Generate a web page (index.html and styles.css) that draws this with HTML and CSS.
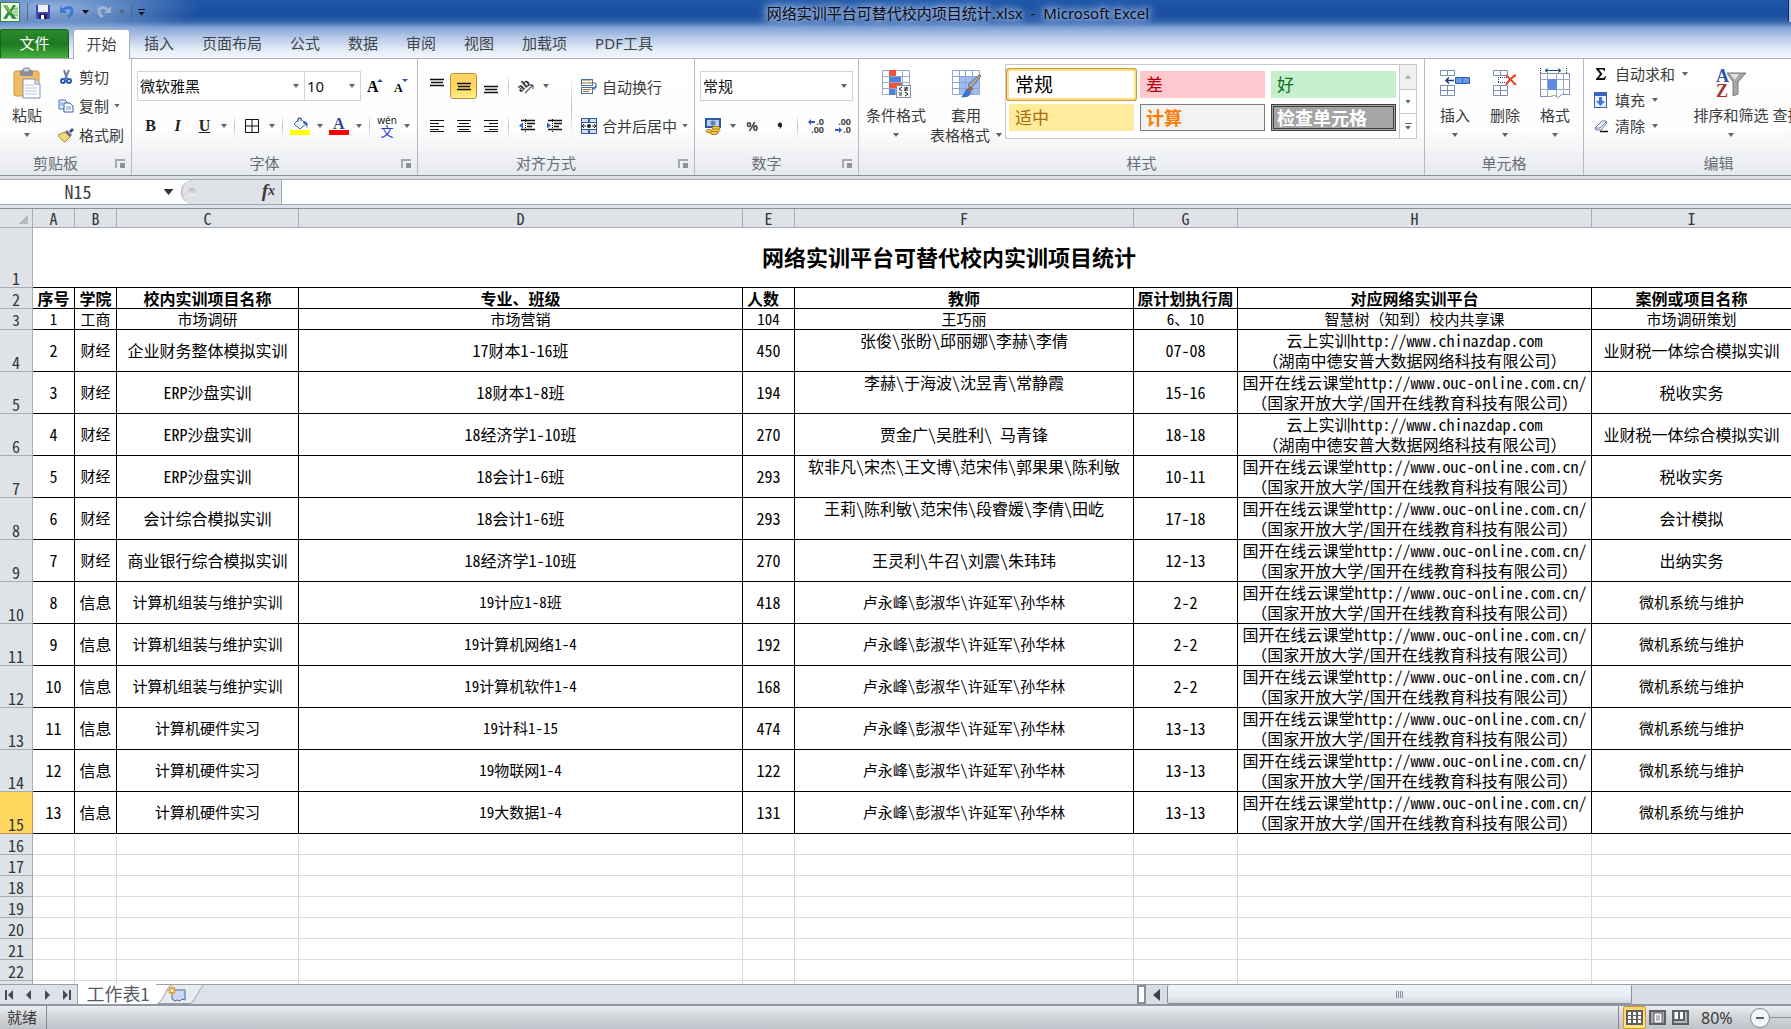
FILE: index.html
```html
<!DOCTYPE html>
<html lang="zh-CN">
<head>
<meta charset="utf-8">
<title>网络实训平台可替代校内项目统计.xlsx - Microsoft Excel</title>
<link rel="stylesheet" href="styles.css">
</head>
<body>
<header class="top">
  <div class="titlebar">
    <div class="qat">
      <svg class="logo" width="21" height="21" viewBox="0 0 21 21"><rect x="0" y="0" width="20" height="20" fill="#2e8b3c"/><rect x="1" y="1" width="18" height="18" fill="#f4fbf2"/><path d="M13 4h5v13h-5z" fill="#cfe6c4"/><path d="M13 7h5M13 10h5M13 13h5" stroke="#6aa860"/><path d="M3 3h4l3 5 3-5h3l-4.500 7 5 7h-4l-3-4.500-3 4.500H3l4.500-7z" fill="#2f8f3a"/><path d="M3 3h4l4 7-1 1z" fill="#7cc242"/></svg>
      <span class="qsep"></span>
      <button class="qb" aria-label="保存"><svg width="14" height="14" viewBox="0 0 14 14"><path d="M0 0h14v14H1L0 13z" fill="#4347b5"/><rect x="2" y="0" width="10" height="7" fill="#eef2fb"/><rect x="3" y="9" width="8" height="5" fill="#20234f"/><rect x="5" y="10" width="3" height="4" fill="#fff"/></svg></button>
      <button class="qb" aria-label="撤消"><svg width="14" height="14" viewBox="0 0 14 14"><path d="M3 5c4-4 9-3 9 1 0 3-2 5-4 6" fill="none" stroke="#3b78d8" stroke-width="3"/><path d="M0 1v7h7z" fill="#3b78d8"/></svg></button>
      <span class="caret dark"></span>
      <button class="qb" aria-label="恢复"><svg width="14" height="14" viewBox="0 0 14 14"><path d="M11 5C7 1 2 2 2 6c0 3 2 5 4 6" fill="none" stroke="#a3b2cc" stroke-width="3"/><path d="M14 1v7H7z" fill="#a3b2cc"/></svg></button>
      <span class="caret"></span>
      <span class="qsep"></span>
      <button class="more" aria-label="自定义快速访问工具栏"><i></i><span class="caret dark"></span></button>
    </div>
    <h1>网络实训平台可替代校内项目统计.xlsx&nbsp; -&nbsp; Microsoft Excel</h1>
    <span class="winbtn"></span>
  </div>
  <nav class="tabs">
    <button class="file">文件</button>
    <button class="on">开始</button>
    <button>插入</button><button>页面布局</button><button>公式</button><button>数据</button><button>审阅</button><button>视图</button><button>加载项</button><button>PDF工具</button>
  </nav>
</header>

<div class="ribbon">
  <section class="group g-clip">
    <div class="body">
      <button class="big paste">
        <svg width="32" height="32" viewBox="0 0 32 32"><rect x="3" y="4" width="25" height="25" rx="2" fill="#f0bd62" stroke="#d09a3c"/><rect x="9" y="3" width="13" height="6" rx="1" fill="#8a909a"/><rect x="12" y="1" width="7" height="4" rx="2" fill="#cfd3d8" stroke="#7d838c"/><path d="M12 12h12l5 5v14H12z" fill="#fff" stroke="#7d93b5"/><path d="M24 12v5h5" fill="#dfe8f5" stroke="#7d93b5"/><path d="M14 18h9M14 21h12M14 24h12M14 27h12" stroke="#b5c3da"/></svg>
        <span>粘贴</span><span class="caret"></span>
      </button>
      <div class="list l29">
        <button><svg width="16" height="16" viewBox="0 0 16 16"><path d="M6 1l3 9M11 1L7 10" stroke="#6d7f9c" stroke-width="2"/><circle cx="5" cy="12" r="2" fill="none" stroke="#2758b8" stroke-width="2"/><circle cx="11" cy="12" r="2" fill="none" stroke="#2758b8" stroke-width="2"/></svg>剪切</button>
        <button><svg width="16" height="16" viewBox="0 0 16 16"><path d="M1 2h6l2 2v7H1z" fill="#eaf2ff" stroke="#4272b8"/><path d="M6 5h6l3 3v6H6z" fill="#fff" stroke="#2d5ca8"/><path d="M2 5h3M2 7h3M8 9h5M8 11h5" stroke="#6c96d6"/></svg>复制<span class="caret"></span></button>
        <button><svg width="16" height="16" viewBox="0 0 16 16"><path d="M0 8l7-3 5 5-5 5c-2-1-5-3-7-7z" fill="#f0d878" stroke="#a88a30"/><path d="M7 5l2-2 5 5-2 2z" fill="#6b6f95"/><path d="M11 4l3-3 2 2-3 3z" fill="#454a85"/></svg>格式刷</button>
      </div>
    </div>
    <footer><span>剪贴板</span><button class="dlg" aria-label="剪贴板设置"></button></footer>
  </section>

  <section class="group g-font">
    <div class="body col">
      <div class="row">
        <label class="combo w168"><select aria-label="字体"><option>微软雅黑</option></select><span class="caret"></span></label>
        <label class="combo w56"><select aria-label="字号"><option>10</option></select><span class="caret"></span></label>
        <button class="t w27" aria-label="增大字号"><svg width="17" height="16" viewBox="0 0 17 16"><text x="1" y="14" class="sf" font-size="16">A</text><path d="M11 4l3-3 3 3z" fill="#2f4fae"/></svg></button>
        <button class="t w24" aria-label="减小字号"><svg width="15" height="16" viewBox="0 0 15 16"><text x="1" y="14" class="sf" font-size="12">A</text><path d="M9 1h6l-3 3z" fill="#2f4fae"/></svg></button>
      </div>
      <div class="row r2">
        <button class="t w27 sfb"><b>B</b></button><button class="t w27 sfb"><i>I</i></button><button class="t w27 sfb"><u>U</u></button><span class="ca"></span><span class="vs"></span>
        <button class="t w28" aria-label="边框"><svg width="14" height="14" viewBox="0 0 14 14"><path d="M.5.5h13v13H.5zM7 0v14M0 7h14" fill="none" stroke="#111"/></svg></button><span class="ca"></span><span class="vs"></span>
        <button class="t w28" aria-label="填充颜色"><svg width="20" height="18" viewBox="0 0 20 18"><path d="M4 7l6-6 6 6-6 5z" fill="#eef4fb" stroke="#47638f"/><path d="M8 5V1h3v3" fill="none" stroke="#47638f"/><path d="M14 4c4 1 4 4 3 7-1-3-1-4-4-5z" fill="#2c5fb8"/><rect x="0" y="13" width="20" height="5" fill="#ff0"/></svg></button><span class="ca"></span>
        <button class="t w28" aria-label="字体颜色"><svg width="20" height="18" viewBox="0 0 20 18"><text x="4" y="12" font-size="16" class="sf" fill="#2b4b8d">A</text><rect x="0" y="13" width="20" height="5" fill="red"/></svg></button><span class="ca"></span><span class="vs"></span>
        <button class="t w28 pinyin" aria-label="拼音"><span>wén</span><span>文</span></button><span class="ca"></span>
      </div>
    </div>
    <footer><span>字体</span><button class="dlg" aria-label="字体设置"></button></footer>
  </section>

  <section class="group g-align">
    <div class="body">
      <div class="col">
        <div class="row">
          <button class="t w27" aria-label="顶端对齐"><svg width="14" height="20" viewBox="0 0 14 20"><path d="M0 3.500h14M1 6.500h12M0 9.500h14" stroke="#111" stroke-width="1.500"/></svg></button>
          <button class="t w27 active" aria-label="垂直居中"><svg width="14" height="20" viewBox="0 0 14 20"><path d="M0 7.500h14M1 10.500h12M0 13.500h14" stroke="#111" stroke-width="1.500"/></svg></button>
          <button class="t w27" aria-label="底端对齐"><svg width="14" height="20" viewBox="0 0 14 20"><path d="M0 10.500h14M1 13.500h12M0 16.500h14" stroke="#111" stroke-width="1.500"/></svg></button>
          <span class="vs"></span>
          <button class="t w27" aria-label="方向"><svg width="17" height="16" viewBox="0 0 17 16"><text x="0" y="12" font-size="11" font-weight="bold" font-family="Noto Sans" transform="rotate(-40 5 10)" fill="#333">ab</text><path d="M7 15l8-8M15 7h-4M15 7v4" stroke="#666" fill="none" stroke-width="1.300"/></svg></button><span class="ca"></span>
        </div>
        <div class="row r2">
          <button class="t w27" aria-label="左对齐"><svg width="14" height="14" viewBox="0 0 14 14"><path d="M0 1.500h14M0 4.500h9M0 7.500h14M0 10.500h9M0 12.500h14" stroke="#111"/></svg></button>
          <button class="t w27" aria-label="居中"><svg width="14" height="14" viewBox="0 0 14 14"><path d="M0 1.500h14M2 4.500h10M0 7.500h14M2 10.500h10M0 12.500h14" stroke="#111"/></svg></button>
          <button class="t w27" aria-label="右对齐"><svg width="14" height="14" viewBox="0 0 14 14"><path d="M0 1.500h14M5 4.500h9M0 7.500h14M5 10.500h9M0 12.500h14" stroke="#111"/></svg></button>
          <span class="vs"></span>
          <button class="t w27" aria-label="减少缩进"><svg width="16" height="14" viewBox="0 0 16 14"><path d="M2 1.500h14M8 4.500h8M8 7.500h5M2 10.500h14" stroke="#111" stroke-width="1.500"/><path d="M6.500 0v14" stroke="#111" stroke-dasharray="1 1"/><path d="M0 6.500l4-3v6z" fill="#2f5fd0"/></svg></button>
          <button class="t w27" aria-label="增加缩进"><svg width="16" height="14" viewBox="0 0 16 14"><path d="M2 1.500h14M8 4.500h8M8 7.500h5M2 10.500h14" stroke="#111" stroke-width="1.500"/><path d="M6.500 0v14" stroke="#111" stroke-dasharray="1 1"/><path d="M5 6.500l-4-3v6z" fill="#2f5fd0"/></svg></button>
        </div>
      </div>
      <span class="vs tall"></span>
      <div class="list l39">
        <button><svg width="16" height="16" viewBox="0 0 16 16"><path d="M0 1h10M0 4h15" stroke="#9a6a3a"/><rect x=".5" y=".5" width="11" height="6" fill="none" stroke="#4c6ea8"/><rect x=".5" y="8.500" width="11" height="6" fill="#fff" stroke="#4c6ea8"/><path d="M2 10.500h8M2 12.500h6" stroke="#9a6a3a"/><path d="M15 4v5h-2M15 7l-3 2 2 2" stroke="#2f5fb0" fill="none"/></svg>自动换行</button>
        <button><svg width="16" height="16" viewBox="0 0 16 16"><rect width="16" height="16" fill="#3a5a94"/><path d="M1 1h6v3H1zM9 1h6v3H9zM1 12h6v3H1zM9 12h6v3H9z" fill="#cfdff5"/><rect x="1" y="5" width="14" height="6" fill="#fff"/><path d="M1 8h4M15 8h-4M3 6L1 8l2 2M13 6l2 2-2 2" stroke="#222" fill="none"/><circle cx="8" cy="8" r="2" fill="#222"/></svg>合并后居中<span class="caret"></span></button>
      </div>
    </div>
    <footer><span>对齐方式</span><button class="dlg" aria-label="对齐设置"></button></footer>
  </section>

  <section class="group g-num">
    <div class="body col">
      <div class="row"><label class="combo w155"><select aria-label="数字格式"><option>常规</option></select><span class="caret"></span></label></div>
      <div class="row r2">
        <button class="t w27" aria-label="会计数字格式"><svg width="17" height="17" viewBox="0 0 17 17"><rect x="0" y="0" width="16" height="10" fill="#2f5aa5"/><rect x="2" y="2" width="12" height="6" fill="#b9d0ee"/><circle cx="8" cy="5" r="2.500" fill="#5880c0"/><ellipse cx="11" cy="10" rx="4" ry="1.600" fill="#f7cf4a" stroke="#b57a14"/><ellipse cx="11" cy="12.500" rx="4" ry="1.600" fill="#f7cf4a" stroke="#b57a14"/><ellipse cx="9" cy="15" rx="4" ry="1.600" fill="#f7cf4a" stroke="#b57a14"/><ellipse cx="4" cy="13" rx="3" ry="1.500" fill="#f7cf4a" stroke="#b57a14"/></svg></button><span class="ca"></span>
        <button class="t w28 pct">%</button><button class="t w27" aria-label="千位分隔"><svg width="6" height="8" viewBox="0 0 6 8"><path d="M1 2a2 2 0 1 1 4 1c0 2-1 3-3 4 1-1 1-2 1-2a2 2 0 0 1-2-3z" fill="#222"/></svg></button><span class="vs"></span>
        <button class="t w27 dec" aria-label="增加小数位数"><span><svg width="7" height="6" viewBox="0 0 7 6"><path d="M0 3l3-3v2h4v2H3v2z" fill="#2f5fc0"/></svg>.0</span><span>.00</span></button>
        <button class="t w27 dec" aria-label="减少小数位数"><span>.00</span><span><svg width="7" height="6" viewBox="0 0 7 6"><path d="M7 3L4 0v2H0v2h4v2z" fill="#2f5fc0"/></svg>.0</span></button>
      </div>
    </div>
    <footer><span>数字</span><button class="dlg" aria-label="数字设置"></button></footer>
  </section>

  <section class="group g-style">
    <div class="body">
      <button class="big w64"><svg width="32" height="32" viewBox="0 0 32 32"><path d="M2.500 3.500h27v24h-27zM9.500 3v25M15.500 3v25M22.500 3v25M2 9.500h28M2 15.500h28M2 21.500h28" fill="#fff" stroke="#9aa9c8"/><path d="M9 3h7v6H9z" fill="#f0533a"/><path d="M9 10h12v5H9z" fill="#4f7fdc"/><path d="M9 16h13v5H9z" fill="#f0533a"/><path d="M9 22h6v6H9z" fill="#4f7fdc"/><rect x="16.500" y="18.500" width="14" height="12" fill="#f4f6f9" stroke="#8490a8"/><path d="M22 20l-3 2 3 2M19 26h3M19 28h3M24 21h4M24 23h4M27 20l-2 4M25 25l3 2-3 2" stroke="#222" fill="none"/></svg><span>条件格式</span><span class="caret"></span></button>
      <button class="big w74"><svg width="32" height="32" viewBox="0 0 32 32"><path d="M2.500 3.500h27v24h-27z" fill="#fff" stroke="#9aa9c8"/><path d="M9 9h20v18H9z" fill="#9dbdf0"/><path d="M9.500 3v25M15.500 3v25M22.500 3v25M2 9.500h28M2 15.500h28M2 21.500h28" stroke="#8ba3d0"/><path d="M31 9l-10 12-3-3L29 8z" fill="#a9a9a9" stroke="#6d6d6d"/><path d="M20 19l3 3-3 3-3-3z" fill="#a0622c"/><path d="M18 22c-4 0-3 5-7 8 5 1 9 0 10-5z" fill="#3f74cc"/></svg><span>套用</span><span class="line">表格格式 <span class="caret"></span></span></button>
      <div class="gallery">
        <div class="swatches">
          <button class="s-normal">常规</button><button class="s-bad">差</button><button class="s-good">好</button>
          <button class="s-neutral">适中</button><button class="s-calc">计算</button><button class="s-check">检查单元格</button>
        </div>
        <div class="scroller"><button aria-label="向上" class="dis"><span class="caret up"></span></button><button aria-label="向下"><span class="caret"></span></button><button aria-label="其他"><i></i><span class="caret"></span></button></div>
      </div>
    </div>
    <footer><span>样式</span></footer>
  </section>

  <section class="group g-cells">
    <div class="body">
      <button class="big w50"><svg width="32" height="32" viewBox="0 0 32 32"><path d="M1.500 3.500h14v5h-14zM8.500 3v6M1.500 18.500h14v10h-14zM8.500 18v11M1 23.500h15" fill="#fff" stroke="#7d8fae"/><path d="M16.500 10.500h14v6h-14z" fill="#6d98e8" stroke="#2f5cb4"/><path d="M23.500 10v7" stroke="#2f5cb4"/><path d="M7 13.500h8M10 10.500l-3 3 3 3" stroke="#1d3c78" fill="none" stroke-width="1.500"/></svg><span>插入</span><span class="caret"></span></button>
      <button class="big w50"><svg width="32" height="32" viewBox="0 0 32 32"><path d="M4.500 3.500h14v5h-14zM11.500 3v6M4.500 18.500h14v10h-14zM11.500 18v11M4 23.500h15" fill="#fff" stroke="#7d8fae"/><path d="M9 10.500h9M9.500 10v6M9 15.500h9" stroke="#1d3c78" stroke-dasharray="1 1"/><path d="M17 8l10 10M27 8c-4 2-7 5-10 10" stroke="#ee4430" stroke-width="2" fill="none"/></svg><span>删除</span><span class="caret"></span></button>
      <button class="big w50"><svg width="32" height="32" viewBox="0 0 32 32"><path d="M1.500 6.500h29v21h-8l-3 3-4-2-4 1h-10z" fill="#fff" stroke="#7d8fae"/><path d="M8.500 6v24M17.500 6v24M24.500 6v22M1 12.500h30M1 22.500h30" stroke="#9aa9c8"/><path d="M9 12h9v11H9z" fill="#5d8be4"/><path d="M1.500 1v5M27.500 1v5" stroke="#333" stroke-dasharray="1 1"/><path d="M7 3.500h14M9 1.500l-3 2 3 2M19 1.500l3 2-3 2" stroke="#24427c" fill="none"/></svg><span>格式</span><span class="caret"></span></button>
    </div>
    <footer><span>单元格</span></footer>
  </section>

  <section class="group g-edit">
    <div class="body">
      <div class="list l26">
        <button><svg width="14" height="16" viewBox="0 0 14 16"><path d="M2 2h9v3h-1c0-1-1-1.500-2-1.500H5L8.500 8 5 12h3.500c1 0 2-.5 2.500-2h1l-1 4H2v-1l4-5-4-5z" fill="#111"/></svg>自动求和<span class="caret"></span></button>
        <button><svg width="14" height="16" viewBox="0 0 14 16"><rect x=".5" y=".5" width="12" height="15" fill="#e8f0fc" stroke="#3a5fb0"/><rect x="1" y="1" width="11" height="3" fill="#3d63bd"/><path d="M5 5h3v4h3l-4.500 5L2 9h3z" fill="#3f74dc"/></svg>填充<span class="caret"></span></button>
        <button><svg width="14" height="16" viewBox="0 0 14 16"><path d="M1 10l7-7h4l1 2-6 7H2z" fill="#f2f5fb" stroke="#6f7fa8"/><path d="M1 10h5l6-6" fill="none" stroke="#6f7fa8"/><path d="M6 13.500h8" stroke="#111" stroke-width="1.500"/></svg>清除<span class="caret"></span></button>
      </div>
      <button class="big w84"><svg width="32" height="32" viewBox="0 0 32 32"><text x="1" y="15" class="sf" font-size="18" fill="#2f55a8">A</text><text x="1" y="30" class="sf" font-size="18" fill="#a83232">Z</text><path d="M12 6h19l-8 9v12l-5 2V15z" fill="#a6a6a6" stroke="#7a7a7a"/><path d="M15 7h9l-4 6z" fill="#e2e2e2"/></svg><span>排序和筛选</span><span class="caret"></span></button>
      <button class="big w76"><svg width="32" height="32" viewBox="0 0 32 32"><circle cx="20" cy="14" r="9" fill="none" stroke="#456" stroke-width="3"/></svg><span>查找和选择</span><span class="caret"></span></button>
    </div>
    <footer><span>编辑</span></footer>
  </section>
</div>

<div class="fbar">
  <input class="name" aria-label="名称框" value="N15"><button class="ndrop" aria-label="名称列表"><span class="caret big-c"></span></button>
  <div class="pill"><i></i><button class="fx" aria-label="插入函数">f<small>x</small></button></div>
  <input class="formula" aria-label="编辑栏">
</div>

<main class="sheet">
<table>
<colgroup><col class="c0"><col class="ca1"><col class="ca1"><col class="cc"><col class="cd"><col class="ce"><col class="cf"><col class="cg"><col class="ch"><col><col class="cj"></colgroup>
<thead><tr><th class="corner"></th><th>A</th><th>B</th><th>C</th><th>D</th><th>E</th><th>F</th><th>G</th><th>H</th><th>I</th><th>J</th></tr></thead>
<tbody class="data">
<tr class="r60"><th>1</th><td colspan="10" class="title">网络实训平台可替代校内实训项目统计</td></tr>
<tr class="r21 head"><th>2</th><td>序号</td><td>学院</td><td>校内实训项目名称</td><td>专业、班级</td><td class="lft">人数</td><td>教师</td><td>原计划执行周</td><td>对应网络实训平台</td><td>案例或项目名称</td><td></td></tr>
<tr class="r21 s"><th>3</th><td>1</td><td>工商</td><td>市场调研</td><td>市场营销</td><td>104</td><td>王巧丽</td><td>6、10</td><td class="full">智慧树（知到）校内共享课</td><td>市场调研策划</td><td></td></tr>
<tr><th>4</th><td>2</td><td class="s">财经</td><td>企业财务整体模拟实训</td><td>17财本1-16班</td><td>450</td><td class="up">张俊\张盼\邱丽娜\李赫\李倩</td><td>07-08</td><td>云上实训http://www.chinazdap.com<br><span class="full">（湖南中德安普大数据网络科技有限公司）</span></td><td>业财税一体综合模拟实训</td><td></td></tr>
<tr><th>5</th><td>3</td><td class="s">财经</td><td>ERP沙盘实训</td><td>18财本1-8班</td><td>194</td><td class="up">李赫\于海波\沈昱青\常静霞</td><td>15-16</td><td>国开在线云课堂http://www.ouc-online.com.cn/<br><span class="full">（国家开放大学/国开在线教育科技有限公司）</span></td><td>税收实务</td><td></td></tr>
<tr><th>6</th><td>4</td><td class="s">财经</td><td>ERP沙盘实训</td><td>18经济学1-10班</td><td>270</td><td>贾金广\吴胜利\ 马青锋</td><td>18-18</td><td>云上实训http://www.chinazdap.com<br><span class="full">（湖南中德安普大数据网络科技有限公司）</span></td><td>业财税一体综合模拟实训</td><td></td></tr>
<tr><th>7</th><td>5</td><td class="s">财经</td><td>ERP沙盘实训</td><td>18会计1-6班</td><td>293</td><td class="up">软非凡\宋杰\王文博\范宋伟\郭果果\陈利敏</td><td>10-11</td><td>国开在线云课堂http://www.ouc-online.com.cn/<br><span class="full">（国家开放大学/国开在线教育科技有限公司）</span></td><td>税收实务</td><td></td></tr>
<tr><th>8</th><td>6</td><td class="s">财经</td><td>会计综合模拟实训</td><td>18会计1-6班</td><td>293</td><td class="up">王莉\陈利敏\范宋伟\段睿媛\李倩\田屹</td><td>17-18</td><td>国开在线云课堂http://www.ouc-online.com.cn/<br><span class="full">（国家开放大学/国开在线教育科技有限公司）</span></td><td>会计模拟</td><td></td></tr>
<tr><th>9</th><td>7</td><td class="s">财经</td><td>商业银行综合模拟实训</td><td>18经济学1-10班</td><td>270</td><td>王灵利\牛召\刘震\朱玮玮</td><td>12-13</td><td>国开在线云课堂http://www.ouc-online.com.cn/<br><span class="full">（国家开放大学/国开在线教育科技有限公司）</span></td><td>出纳实务</td><td></td></tr>
<tr><th>10</th><td>8</td><td>信息</td><td class="s">计算机组装与维护实训</td><td class="s">19计应1-8班</td><td>418</td><td class="s">卢永峰\彭淑华\许延军\孙华林</td><td>2-2</td><td>国开在线云课堂http://www.ouc-online.com.cn/<br><span class="full">（国家开放大学/国开在线教育科技有限公司）</span></td><td class="s">微机系统与维护</td><td></td></tr>
<tr><th>11</th><td>9</td><td>信息</td><td class="s">计算机组装与维护实训</td><td class="s">19计算机网络1-4</td><td>192</td><td class="s">卢永峰\彭淑华\许延军\孙华林</td><td>2-2</td><td>国开在线云课堂http://www.ouc-online.com.cn/<br><span class="full">（国家开放大学/国开在线教育科技有限公司）</span></td><td class="s">微机系统与维护</td><td></td></tr>
<tr><th>12</th><td>10</td><td>信息</td><td class="s">计算机组装与维护实训</td><td class="s">19计算机软件1-4</td><td>168</td><td class="s">卢永峰\彭淑华\许延军\孙华林</td><td>2-2</td><td>国开在线云课堂http://www.ouc-online.com.cn/<br><span class="full">（国家开放大学/国开在线教育科技有限公司）</span></td><td class="s">微机系统与维护</td><td></td></tr>
<tr><th>13</th><td>11</td><td>信息</td><td class="s">计算机硬件实习</td><td class="s">19计科1-15</td><td>474</td><td class="s">卢永峰\彭淑华\许延军\孙华林</td><td>13-13</td><td>国开在线云课堂http://www.ouc-online.com.cn/<br><span class="full">（国家开放大学/国开在线教育科技有限公司）</span></td><td class="s">微机系统与维护</td><td></td></tr>
<tr><th>14</th><td>12</td><td>信息</td><td class="s">计算机硬件实习</td><td class="s">19物联网1-4</td><td>122</td><td class="s">卢永峰\彭淑华\许延军\孙华林</td><td>13-13</td><td>国开在线云课堂http://www.ouc-online.com.cn/<br><span class="full">（国家开放大学/国开在线教育科技有限公司）</span></td><td class="s">微机系统与维护</td><td></td></tr>
<tr class="cur"><th>15</th><td>13</td><td>信息</td><td class="s">计算机硬件实习</td><td class="s">19大数据1-4</td><td>131</td><td class="s">卢永峰\彭淑华\许延军\孙华林</td><td>13-13</td><td>国开在线云课堂http://www.ouc-online.com.cn/<br><span class="full">（国家开放大学/国开在线教育科技有限公司）</span></td><td class="s">微机系统与维护</td><td></td></tr>
</tbody>
<tbody class="blank">
<tr><th>16</th><td></td><td></td><td></td><td></td><td></td><td></td><td></td><td></td><td></td><td></td></tr>
<tr><th>17</th><td></td><td></td><td></td><td></td><td></td><td></td><td></td><td></td><td></td><td></td></tr>
<tr><th>18</th><td></td><td></td><td></td><td></td><td></td><td></td><td></td><td></td><td></td><td></td></tr>
<tr><th>19</th><td></td><td></td><td></td><td></td><td></td><td></td><td></td><td></td><td></td><td></td></tr>
<tr><th>20</th><td></td><td></td><td></td><td></td><td></td><td></td><td></td><td></td><td></td><td></td></tr>
<tr><th>21</th><td></td><td></td><td></td><td></td><td></td><td></td><td></td><td></td><td></td><td></td></tr>
<tr><th>22</th><td></td><td></td><td></td><td></td><td></td><td></td><td></td><td></td><td></td><td></td></tr>
<tr><th></th><td></td><td></td><td></td><td></td><td></td><td></td><td></td><td></td><td></td><td></td></tr>
</tbody>
</table>
</main>

<div class="sheetbar">
  <div class="navs">
    <button aria-label="第一张"><svg width="9" height="10" viewBox="0 0 9 10"><path d="M1 0v10" stroke="#444b57" stroke-width="2"/><path d="M8 0v10L3 5z" fill="#444b57"/></svg></button>
    <button aria-label="上一张"><svg width="9" height="10" viewBox="0 0 9 10"><path d="M7 0v10L2 5z" fill="#444b57"/></svg></button>
    <button aria-label="下一张"><svg width="9" height="10" viewBox="0 0 9 10"><path d="M2 0v10l5-5z" fill="#444b57"/></svg></button>
    <button aria-label="最后一张"><svg width="9" height="10" viewBox="0 0 9 10"><path d="M8 0v10" stroke="#444b57" stroke-width="2"/><path d="M1 0v10l5-5z" fill="#444b57"/></svg></button>
  </div>
  <button class="stab">工作表1</button>
  <button class="newtab" aria-label="插入工作表"><svg width="50" height="19" viewBox="0 0 50 19"><path d="M0 0h15L3 18H0z" fill="#fff"/><path d="M14 0h34L36 18H3z" fill="#e9ecef"/><path d="M14.500 0C9 6 8 14 2 18.500H35C40 14 42 6 47.500 0" fill="none" stroke="#9aa1ab"/><path d="M16 5h13v10l-3-1-2 2-3-1-2 1-3-2z" fill="#c9d9f5" stroke="#4a68a4"/><path d="M16 1v9M11.500 5.500h9M13 2.500l6 6M19 2.500l-6 6" stroke="#e09a2c" stroke-width="1.500"/><circle cx="16" cy="5.500" r="1.500" fill="#fff6c8"/></svg></button>
  <div class="hscroll"><span class="split"></span><button class="larr" aria-label="向左滚动"><svg width="7" height="12" viewBox="0 0 7 12"><path d="M7 0v12L0 6z" fill="#3c424c"/></svg></button><div class="thumb"><i></i><i></i><i></i><i></i></div></div>
</div>
<footer class="status">
  <span class="ready">就绪</span>
  <div class="views">
    <button class="vb on" aria-label="普通"><svg width="17" height="15" viewBox="0 0 17 15"><rect x="0" y="0" width="17" height="15" fill="#5e5f63"/><path d="M2 2h3v3H2zM7 2h3v3H7zM12 2h3v3h-3zM2 6h3v3H2zM7 6h3v3H7zM12 6h3v3h-3zM2 10h3v3H2zM7 10h3v3H7zM12 10h3v3h-3z" fill="#fff"/></svg></button>
    <button class="vb" aria-label="页面布局"><svg width="17" height="15" viewBox="0 0 17 15"><rect x="1" y="1" width="15" height="13" fill="#a5a8ac" stroke="#5e5f63" stroke-width="2"/><rect x="5" y="3" width="8" height="10" fill="#fff" stroke="#5e5f63"/><path d="M7 6h4M7 8h4M7 10h4" stroke="#777"/></svg></button>
    <button class="vb" aria-label="分页预览"><svg width="17" height="15" viewBox="0 0 17 15"><rect x="1" y="1" width="15" height="13" fill="#b5b8bc" stroke="#5e5f63" stroke-width="2"/><path d="M3 2h3v7H3zM8 2h3v7H8z" fill="#fff"/><path d="M2 10h10V1M7 1v9" stroke="#5e5f63" stroke-width="2" fill="none"/></svg></button>
    <span class="pc">80%</span>
    <button class="minus" aria-label="缩小"></button><span class="track"></span>
  </div>
</footer>
</body>
</html>
```
FILE: styles.css
```css
* { box-sizing: border-box; }
html, body { height: 100%; }
body {
  margin: 0;
  display: flex;
  flex-direction: column;
  overflow: hidden;
  background: #fff;
  font: 15px/20px "Noto Sans", "Noto Sans CJK SC", sans-serif;
  color: #3b3b3b;
}
button, input, select { font: inherit; color: inherit; border: 0; padding: 0; margin: 0; background: none; border-radius: 0; }
button { display: flex; align-items: center; justify-content: center; white-space: nowrap; }
svg { display: block; flex: none; }
.sf, .sfb { font-family: "Liberation Serif", serif; font-weight: bold; }

.caret { flex: none; width: 6px; height: 4px; background: #5f636a; clip-path: polygon(0 0, 100% 0, 50% 100%); }
.caret.dark { width: 7px; height: 4px; background: #111; }
.caret.up { clip-path: polygon(50% 0, 100% 100%, 0 100%); background: #aaa; }
.caret.big-c { width: 10px; height: 6px; background: #333; }

/* title bar and ribbon tabs */
.top {
  flex: none;
  background:
    radial-gradient(ellipse 150px 30px at 50px 8px, rgba(190, 210, 240, .75), transparent),
    linear-gradient(#1f57a9 0, #1b4f9f 16px, #3767b0 22px, #86a5d6 28px, #b9cbe9 38px, #e4ecf8 50px, #f3f7fc 58px);
}
.titlebar { display: flex; align-items: center; height: 26px; }
.qat { display: flex; align-items: center; gap: 6px; width: 150px; padding-bottom: 2px; }
.qb { width: 18px; }
.qsep { width: 1px; height: 18px; background: #53698f; }
.more { flex-direction: column; gap: 2px; }
.more i { width: 7px; height: 1px; background: #111; }
.titlebar h1 {
  flex: 1;
  margin: 0;
  padding-right: 22px;
  text-align: center;
  font-size: 15px;
  font-weight: normal;
  color: #0a0a14;
  text-shadow: 0 0 4px #a3bde6, 0 0 8px #a3bde6, 0 0 12px #a3bde6, 0 0 12px #a3bde6;
}
.winbtn { width: 3px; height: 22px; border-left: 1px solid #16294e; background: #b8c8e2; align-self: flex-start; }
.tabs { display: flex; height: 33px; padding-top: 3px; border-bottom: 1px solid #a9b0ba; }
.tabs button { padding: 0 14px 2px; color: #3f444c; }
.tabs .file { width: 69px; margin-right: 4px; color: #fff; background: linear-gradient(#2a8a2c, #1f7a23 50%, #45b03c); border: 1px solid #17641c; border-bottom: 0; border-radius: 2px 4px 0 0; }
.tabs .on { width: 57px; margin-bottom: -1px; background: #fff; border: 1px solid #a9b0ba; border-bottom: 0; border-radius: 3px 3px 0 0; }

/* ribbon */
.ribbon { flex: none; display: flex; height: 117px; overflow: hidden; background: linear-gradient(#fff 0, #fdfdfe 60%, #e6e9ed); border-bottom: 1px solid #8b9097; }
.group { flex: none; display: flex; flex-direction: column; border-right: 1px solid #b5b9bf; }
.group .body { flex: 1; display: flex; padding: 4px 5px 0; }
.group .col { display: flex; flex-direction: column; }
.group > footer { display: flex; align-items: center; height: 24px; padding: 0 6px; color: #676c77; }
.group > footer span { flex: 1; text-align: center; }
.group > footer .dlg { width: 10px; height: 9px; margin-left: 10px; border-left: 2px solid #a5a8ad; border-top: 2px solid #a5a8ad; background: linear-gradient(#8f9399, #8f9399) right bottom / 5px 5px no-repeat; }
.g-clip { width: 132px; }
.g-font { width: 286px; }
.g-align { width: 277px; }
.g-num { width: 164px; }
.g-style { width: 566px; }
.g-cells { width: 159px; }
.g-edit { width: 270px; }

.big { flex: none; flex-direction: column; justify-content: flex-start; gap: 6px; padding-top: 4px; }
.big span { line-height: 20px; }
.big > .caret { margin-top: 2px; }
.big .line { display: flex; align-items: center; gap: 6px; margin-top: -6px; }
.paste { width: 44px; }
.w50 { width: 50px; } .w64 { width: 64px; } .w74 { width: 76px; } .w76 { width: 76px; } .w84 { width: 82px; }
.list { display: flex; flex-direction: column; }
.list button { justify-content: flex-start; gap: 5px; }
.l29 { padding-left: 9px; margin-top: -1px; }
.l29 button { height: 29px; }
.l39 { padding: 4px 0 0 5px; }
.l39 button { height: 39px; gap: 5px; }
.l26 { width: 102px; padding-left: 5px; margin-top: -2px; }
.l26 button { height: 26px; gap: 7px; }

.row { display: flex; align-items: center; height: 30px; margin-top: 8px; }
.r2 { margin-top: 10px; }
.t { flex: none; height: 26px; }
.w24 { width: 24px; } .w27 { width: 27px; } .w28 { width: 28px; }
.sfb { font-size: 16px; color: #222; }
.active { border: 1px solid #c08f3a; border-radius: 3px; background: linear-gradient(#fbd367, #ffd55c 50%, #fff08a); }
.pinyin { flex-direction: column; font-size: 10px; line-height: 9px; color: #222; }
.pinyin span + span { font-size: 13px; line-height: 12px; color: #2840c8; }
.dec { flex-direction: column; align-items: center; font-size: 9px; line-height: 8px; font-weight: bold; color: #444; }
.dec span { display: flex; align-items: center; justify-content: flex-end; gap: 1px; width: 17px; }
.ca { flex: none; width: 12px; height: 4px; background: #5f636a; clip-path: polygon(3px 0, 9px 0, 50% 100%); }
.ca + .t { margin-left: -1px; }
.vs { flex: none; width: 9px; height: 22px; background: linear-gradient(transparent, #b9bdc4, transparent) center / 1px 100% no-repeat; }
.ca + .vs { width: 8px; }
.vs.tall { height: 60px; margin-top: 14px; }
.combo { display: flex; align-items: center; height: 30px; padding-right: 5px; border: 1px solid #d0d3d7; background: #fff; }
.combo + .combo { border-left: 0; }
.combo select { flex: 1; min-width: 0; height: 28px; padding-left: 2px; appearance: none; color: #111; outline: 0; }
.w168 { width: 168px; } .w56 { width: 56px; } .w155 { width: 155px; }
.pct { font-size: 13px; font-weight: bold; }

.gallery { display: flex; width: 412px; height: 75px; margin: 1px 0 0 1px; border: 1px solid #c6cad0; background: #fff; }
.swatches { flex: 1; display: grid; grid-template-columns: repeat(3, 125px); grid-auto-rows: 27px; gap: 6px; padding: 6px 3px; font-size: 17px; line-height: 24px; font-family: "Noto Sans CJK SC", sans-serif; }
.swatches button { justify-content: flex-start; padding: 0 0 2px 6px; }
.swatches .s-normal { font-size: 19px; color: #000; background: #fff; border-radius: 1px; box-shadow: 0 0 0 2px #ffe080, 0 0 0 3px #c99a3a; }
.s-bad { color: #b00010; background: #ffc7ce; }
.s-good { color: #0a7018; background: #c6efce; }
.s-neutral { color: #a86a10; background: #ffeb9c; }
.swatches .s-calc { color: #fa7d00; background: #f2f2f2; border: 1px solid #7f7f7f; font-size: 18px; font-weight: bold; padding-left: 5px; }
.swatches .s-check { color: #fff; background: #a5a5a5; border: 3px double #3f3f3f; font-size: 18px; font-weight: bold; padding-left: 3px; }
.scroller { display: flex; flex-direction: column; width: 18px; border-left: 1px solid #c6cad0; }
.scroller button { flex: 1; flex-direction: column; gap: 2px; border-bottom: 1px solid #c6cad0; }
.scroller button:last-child { border-bottom: 0; }
.scroller .dis { background: #f0f0f0; }
.scroller i { width: 7px; height: 1px; background: #6b6f76; }

/* formula bar */
.fbar { flex: none; display: flex; height: 32px; border-top: 3px solid #dcdfe4; border-bottom: 3px solid #dce1ec; background: #fff; box-shadow: inset 0 1px #a3a8af, inset 0 -1px #a3a8af; }
.name { width: 156px; padding-bottom: 2px; text-align: center; font: 18px/24px "Noto Sans CJK SC", sans-serif; font-feature-settings: "hwid"; }
.ndrop { width: 25px; }
.pill { display: flex; align-items: center; justify-content: space-between; width: 101px; margin: 1px 0; padding: 0 6px; border: 1px solid #a3a8af; border-width: 0 1px 0 1px; border-radius: 13px 0 0 13px; background: #dfe2e6; }
.pill i { width: 8px; height: 8px; border-radius: 4px; background: linear-gradient(#b6bac0, #f2f4f6); }
.fx { font: italic bold 19px/20px "Liberation Serif", serif; padding-bottom: 2px; }
.fx small { font-size: 14px; }
.formula { flex: 1; min-width: 0; }

/* worksheet */
.sheet { flex: 1; min-height: 0; overflow: hidden; border-top: 1px solid #8b9097; }
table { width: calc(100% + 75px); table-layout: fixed; border-collapse: separate; border-spacing: 0; font: 16px/20px "Noto Sans CJK SC", sans-serif; font-feature-settings: "hwid"; color: #000; }
.c0 { width: 33px; } .ca1 { width: 42px; } .cc { width: 182px; } .cd { width: 444px; } .ce { width: 52px; }
.cf { width: 339px; } .cg { width: 104px; } .ch { width: 354px; } .cj { width: 74px; }
th { height: 42px; padding: 0; font-weight: normal; line-height: 18px; vertical-align: bottom; color: #33363b; background: #dfe2e7; border: 0 solid #a8adb5; border-width: 0 1px 1px 0; }
thead th { height: 19px; }
.corner { background: linear-gradient(135deg, #dfe2e7 50%, #b8bcc2 50%) 18px 5px / 10px 10px no-repeat, #dfe2e7; }
td { height: 42px; padding: 0 0 1px; text-align: center; vertical-align: middle; white-space: nowrap; overflow: hidden; border: 0 solid #000; border-width: 0 1px 1px 0; }
.r60 td, .r60 th { height: 60px; }
.r21 td, .r21 th, .blank td, .blank th { height: 21px; line-height: 18px; }
.title { padding-bottom: 3px; font-size: 22px; font-weight: bold; }
.head td { font-weight: bold; }
.head .lft { text-align: left; padding-left: 4px; }
.s, .s td { font-size: 15px; }
.up { vertical-align: top; }
.full { font-feature-settings: normal; }
.cur th { background: #ffd95f; border-color: #c5924a; }
.blank td { border-color: #d9dadb; }

/* sheet tabs and horizontal scroll bar */
.sheetbar { flex: none; display: flex; height: 20px; border-top: 1px solid #9aa1ab; background: #dce1ea; }
.navs { display: flex; width: 78px; border-right: 1px solid #9aa1ab; }
.navs button { width: 19px; }
.stab { width: 78px; margin-top: -1px; padding: 0 0 2px 2px; background: #fff; color: #555b66; font: 18px/18px "Noto Sans CJK SC", sans-serif; font-feature-settings: "hwid"; }
.hscroll { display: flex; width: 654px; margin-left: auto; background: #d9dde6; }
.split { width: 9px; border: 2px solid #8a9099; background: #fff; }
.larr { width: 21px; }
.thumb { display: flex; align-items: center; justify-content: center; gap: 1px; width: 465px; border: 1px solid #8a9099; border-top: 0; border-radius: 2px; background: linear-gradient(#f1f4f9, #e9ecf2 60%, #d3d7df); }
.thumb i { width: 1px; height: 7px; background: #8a9099; }

.status { flex: none; display: flex; height: 25px; border-top: 2px solid #8f97a5; background: linear-gradient(#eceef0, #d5d8dc 40%, #bfc3c9); }
.ready { width: 47px; padding: 1px 0 0 7px; border-right: 1px solid #83888f; }
.views { display: flex; align-items: center; width: 173px; margin-left: auto; padding-left: 4px; border-left: 1px solid #83888f; }
.vb { width: 23px; height: 23px; }
.vb.on { border: 1px solid #d0963a; border-radius: 2px; background: linear-gradient(#fbd367, #ffe97c); }
.pc { width: 58px; padding-left: 9px; font-size: 16px; }
.minus { flex: none; width: 20px; height: 20px; border: 1px solid #7f858e; border-radius: 10px; background: linear-gradient(#5d636c, #5d636c) center / 8px 2px no-repeat, #f4f6f8; }
.track { flex: 1; height: 1px; background: #8a9099; }
```
